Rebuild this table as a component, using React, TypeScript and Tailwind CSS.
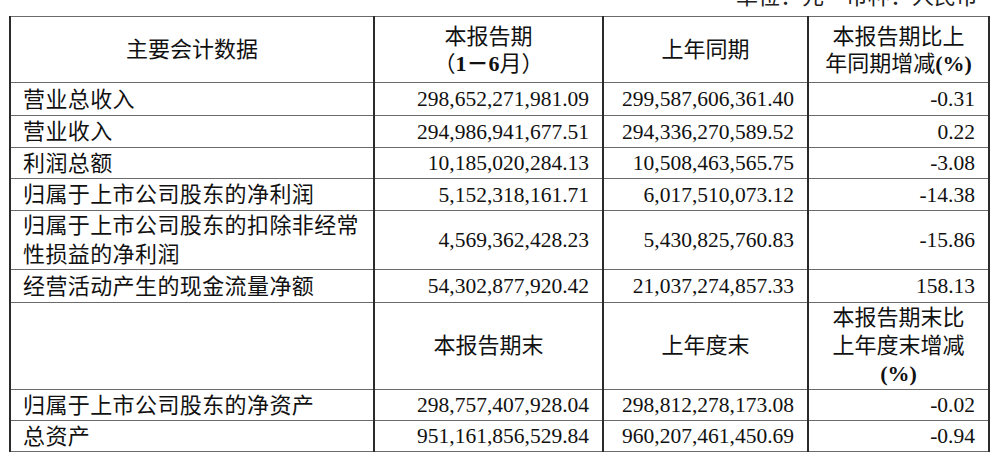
import React from "react";

type Row = {
  label: React.ReactNode;
  cur: string;
  prev: string;
  pct: string;
  h: string;
};

const rows1: Row[] = [
  { label: "营业总收入", cur: "298,652,271,981.09", prev: "299,587,606,361.40", pct: "-0.31", h: "h-[33px]" },
  { label: "营业收入", cur: "294,986,941,677.51", prev: "294,336,270,589.52", pct: "0.22", h: "h-[32px]" },
  { label: "利润总额", cur: "10,185,020,284.13", prev: "10,508,463,565.75", pct: "-3.08", h: "h-[31px]" },
  { label: "归属于上市公司股东的净利润", cur: "5,152,318,161.71", prev: "6,017,510,073.12", pct: "-14.38", h: "h-[32px]" },
  {
    label: (
      <>
        归属于上市公司股东的扣除非经常
        <br />
        性损益的净利润
      </>
    ),
    cur: "4,569,362,428.23",
    prev: "5,430,825,760.83",
    pct: "-15.86",
    h: "h-[59px]",
  },
  { label: "经营活动产生的现金流量净额", cur: "54,302,877,920.42", prev: "21,037,274,857.33", pct: "158.13", h: "h-[33px]" },
];

const rows2: Row[] = [
  { label: "归属于上市公司股东的净资产", cur: "298,757,407,928.04", prev: "298,812,278,173.08", pct: "-0.02", h: "h-[31px]" },
  { label: "总资产", cur: "951,161,856,529.84", prev: "960,207,461,450.69", pct: "-0.94", h: "h-[31px]" },
];

// cell border: vertical lines darker than horizontal ones, like the pdf render
const cell = "border-y border-y-[#6b6b6b] border-x-2 border-x-[#2b2b2b] p-0 align-middle";
const num = "text-right pr-[13px] text-[21.5px]";

function DataRow({ r }: { r: Row }) {
  return (
    <tr className={r.h}>
      <td className={`${cell} pl-[12px] text-left leading-[29px] tracking-[0.4px]`}>{r.label}</td>
      <td className={`${cell} ${num}`}>{r.cur}</td>
      <td className={`${cell} ${num}`}>{r.prev}</td>
      <td className={`${cell} ${num}`}>{r.pct}</td>
    </tr>
  );
}

export default function App() {
  return (
    <div className="w-[1000px] h-[469px] bg-white overflow-hidden font-['Liberation_Serif','Noto_Sans_CJK_SC',serif] text-[22px] leading-[26px] text-[#111]">
      {/* unit line, mostly cut off at the top of the crop */}
      <div className="h-[16px] overflow-hidden">
        <div className="-mt-[14px] pr-[22px] text-right leading-[22px] text-[#222]">单位：元　币种：人民币</div>
      </div>

      <table className="ml-[9px] w-[979px] border-collapse table-fixed">
        <colgroup>
          <col className="w-[364px]" />
          <col className="w-[229px]" />
          <col className="w-[205px]" />
          <col className="w-[181px]" />
        </colgroup>
        <tbody>
          <tr className="h-[66px]">
            <td className={`${cell} text-center`}>主要会计数据</td>
            <td className={`${cell} text-center leading-[27px]`}>
              本报告期
              <br />
              （<span className="font-bold">1－6</span>月）
            </td>
            <td className={`${cell} text-center`}>上年同期</td>
            <td className={`${cell} text-center leading-[27px]`}>
              本报告期比上
              <br />
              年同期增减<span className="font-bold">(%)</span>
            </td>
          </tr>

          {rows1.map((r, i) => (
            <DataRow key={i} r={r} />
          ))}

          <tr className="h-[87px]">
            <td className={cell}></td>
            <td className={`${cell} text-center`}>本报告期末</td>
            <td className={`${cell} text-center`}>上年度末</td>
            <td className={`${cell} text-center leading-[28px]`}>
              本报告期末比
              <br />
              上年度末增减
              <br />
              <span className="font-bold">(%)</span>
            </td>
          </tr>

          {rows2.map((r, i) => (
            <DataRow key={i} r={r} />
          ))}
        </tbody>
      </table>
    </div>
  );
}
